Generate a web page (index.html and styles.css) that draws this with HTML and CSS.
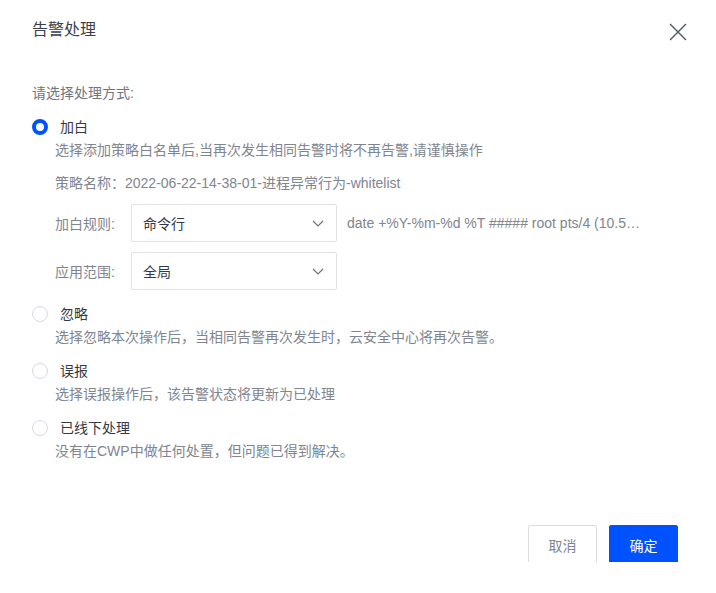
FILE: index.html
```html
<!DOCTYPE html>
<html lang="zh-CN">
<head>
<meta charset="utf-8">
<link rel="stylesheet" href="styles.css">
</head>
<body>
<div class="dialog">
  <div class="header">
    <div class="title">告警处理</div>
    <svg class="close" width="18" height="18" viewBox="0 0 18 18"><path d="M1 1L17 17M17 1L1 17" stroke="#4e5563" stroke-width="1.4" fill="none"/></svg>
  </div>
  <div class="prompt">请选择处理方式:</div>

  <div class="option">
    <div class="opt-row"><span class="radio checked"></span><span class="opt-label">加白</span></div>
    <div class="desc">选择添加策略白名单后,当再次发生相同告警时将不再告警,请谨慎操作</div>
    <div class="policy">策略名称：2022-06-22-14-38-01-进程异常行为-whitelist</div>
    <div class="field first">
      <span class="field-label">加白规则:</span>
      <div class="select"><span>命令行</span><svg class="chev" width="12" height="7" viewBox="0 0 12 7"><path d="M1 1L6 6L11 1" stroke="#6b7180" stroke-width="1.2" fill="none"/></svg></div>
      <span class="cmd">date +%Y-%m-%d %T ##### root pts/4 (10.5…</span>
    </div>
    <div class="field">
      <span class="field-label">应用范围:</span>
      <div class="select"><span>全局</span><svg class="chev" width="12" height="7" viewBox="0 0 12 7"><path d="M1 1L6 6L11 1" stroke="#6b7180" stroke-width="1.2" fill="none"/></svg></div>
    </div>
  </div>

  <div class="option">
    <div class="opt-row"><span class="radio"></span><span class="opt-label">忽略</span></div>
    <div class="desc">选择忽略本次操作后，当相同告警再次发生时，云安全中心将再次告警。</div>
  </div>
  <div class="option">
    <div class="opt-row"><span class="radio"></span><span class="opt-label">误报</span></div>
    <div class="desc">选择误报操作后，该告警状态将更新为已处理</div>
  </div>
  <div class="option">
    <div class="opt-row"><span class="radio"></span><span class="opt-label">已线下处理</span></div>
    <div class="desc">没有在CWP中做任何处置，但问题已得到解决。</div>
  </div>

  <div class="footer">
    <button class="btn cancel">取消</button>
    <button class="btn primary">确定</button>
  </div>
</div>
</body>
</html>
```

FILE: styles.css
```css
html, body {
  margin: 0;
  padding: 0;
  background: #fff;
}
body {
  font-family: "Liberation Sans", "Noto Sans CJK SC", sans-serif;
  font-size: 14px;
  color: #333;
}
.dialog {
  width: 716px;
  height: 562px;
  overflow: hidden;
  box-sizing: border-box;
  padding: 18px 29px 0 32px;
  display: flex;
  flex-direction: column;
}
.header {
  display: flex;
  justify-content: space-between;
  align-items: center;
  height: 24px;
}
.title {
  font-size: 16px;
  line-height: 24px;
  color: #3a3f4a;
}
.close {
  margin-top: 4px;
}
.prompt {
  margin-top: 41px;
  line-height: 20px;
  color: #70757f;
}
.option {
  margin-top: 13px;
}
.option:first-of-type {
  margin-top: 12px;
}
.opt-row {
  display: flex;
  align-items: center;
  height: 22px;
}
.radio {
  width: 16px;
  height: 16px;
  box-sizing: border-box;
  border-radius: 50%;
  border: 1px solid #d6d9df;
  background: #fff;
  flex: none;
}
.radio.checked {
  border: 4px solid #0052ff;
}
.opt-label {
  margin-left: 12px;
  line-height: 22px;
  color: #333a45;
}
.desc {
  margin-left: 23px;
  margin-top: 2px;
  line-height: 20px;
  color: #80858f;
}
.policy {
  margin-left: 23px;
  margin-top: 13px;
  line-height: 20px;
  color: #80858f;
}
.field {
  margin-left: 23px;
  margin-top: 10px;
  display: flex;
  align-items: center;
}
.field.first {
  margin-top: 11px;
}
.field-label {
  width: 76px;
  flex: none;
  color: #80858f;
}
.select {
  width: 206px;
  height: 38px;
  box-sizing: border-box;
  border: 1px solid #dfe2e7;
  border-radius: 2px;
  display: flex;
  align-items: center;
  justify-content: space-between;
  padding: 0 12px 0 11px;
  color: #333a45;
  flex: none;
}
.cmd {
  margin-left: 10px;
  white-space: nowrap;
  color: #80858f;
}
.footer {
  margin-top: 64px;
  display: flex;
  justify-content: flex-end;
  gap: 12px;
  padding-right: 9px;
}
.btn {
  width: 69px;
  height: 40px;
  flex: none;
  box-sizing: border-box;
  border-radius: 2px;
  font-family: inherit;
  font-size: 14px;
  padding: 0;
}
.cancel {
  background: #fff;
  border: 1px solid #d9dce2;
  color: #80858f;
}
.primary {
  background: #0052ff;
  border: 1px solid #0052ff;
  color: #fff;
}
```
